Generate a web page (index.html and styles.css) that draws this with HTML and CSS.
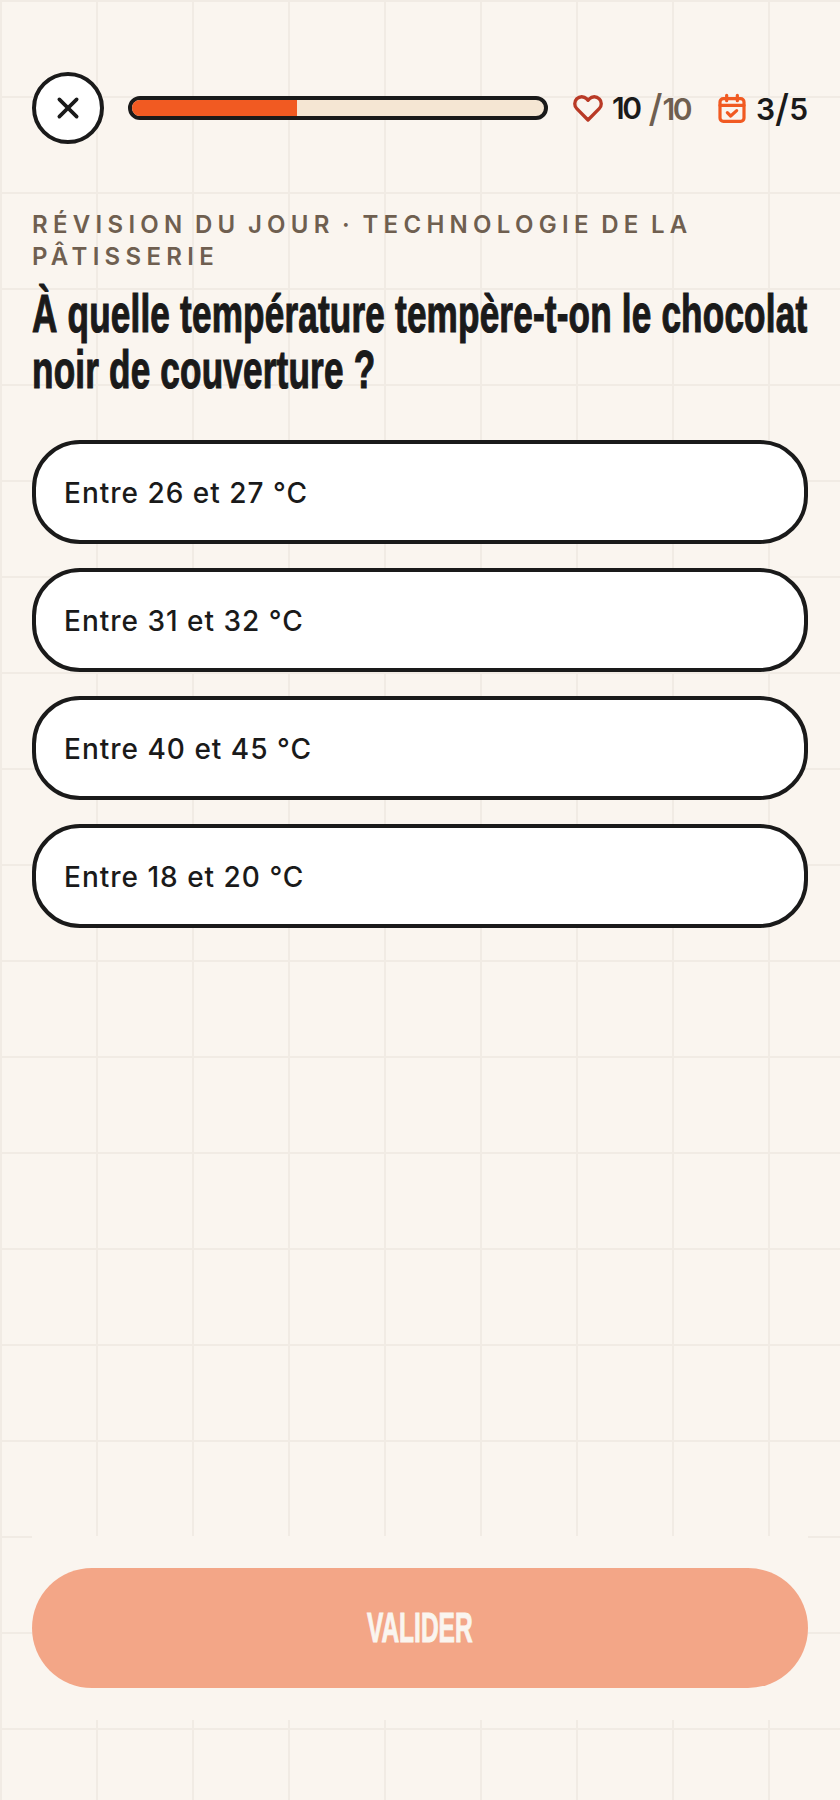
FILE: index.html

```html
<!DOCTYPE html>
<html lang="fr">
<head>
    <meta charset="UTF-8">
    <meta name="viewport" content="width=device-width, initial-scale=1.0">
    <title>Révision du jour</title>
    <link rel="stylesheet" href="styles.css">
</head>
<body>

<div class="ecran">
    <header class="entete">
        <button class="fermer" aria-label="Fermer">
            <svg width="32" height="32" viewBox="0 0 24 24" fill="none" stroke="#1a1a1a" stroke-width="2.75" stroke-linecap="round"><path d="M5.5 5.5l13 13M18.500 5.500l-13 13"/></svg>
        </button>
        <div class="progression"><div class="progression-barre" style="width: 40%"></div></div>
        <div class="stat stat-vies">
            <svg width="32" height="32" viewBox="0 0 24 24" fill="none" stroke="#b93a26" stroke-width="2.5" stroke-linecap="round" stroke-linejoin="round"><path d="M20.4 5.1a5.2 5.2 0 0 0-7.4 0L12 6.2l-1-1.100a5.200 5.200 0 0 0-7.400 7.400L12 21l8.400-8.500a5.200 5.200 0 0 0 0-7.400z"/></svg>
            <span class="stat-valeur">10</span>
            <span class="stat-total"><span class="barre">/</span>10</span>
        </div>
        <div class="stat">
            <svg width="32" height="32" viewBox="0 0 24 24" fill="none" stroke="#f15a22" stroke-width="2.4" stroke-linecap="round" stroke-linejoin="round"><rect x="3" y="5" width="18" height="17" rx="2.500"/><path d="M8 2.500v4M16 2.500v4M3 10h18M8.500 15.500l2.500 2.500 4.500-4"/></svg>
            <span class="stat-jours">3<span class="barre">/</span>5</span>
        </div>
    </header>

    <main class="question">
        <p class="surtitre">RÉVISION DU JOUR · TECHNOLOGIE DE LA PÂTISSERIE</p>
        <h1 class="intitule"><span class="intitule-texte">À quelle température tempère-t-on le chocolat noir de couverture ?</span></h1>
        <div class="reponses">
            <button class="reponse">Entre 26 et 27 °C</button>
            <button class="reponse">Entre 31 et 32 °C</button>
            <button class="reponse">Entre 40 et 45 °C</button>
            <button class="reponse">Entre 18 et 20 °C</button>
        </div>
    </main>

    <footer class="pied">
        <button class="valider" disabled><span class="valider-texte">VALIDER</span></button>
    </footer>
</div>

</body>
</html>
```

FILE: styles.css

```css
* {
    box-sizing: border-box;
}

body {
    margin: 0;
    height: 1800px;
    font-family: Inter, "Open Sans", sans-serif;
    color: #1a1a1a;
    background-color: #faf5ef;
    background-image:
        linear-gradient(#f1ebe4 2px, transparent 2px),
        linear-gradient(90deg, #f1ebe4 2px, transparent 2px);
    background-size: 96px 96px;
    overflow: hidden;
}

button {
    font-family: inherit;
    color: inherit;
    cursor: pointer;
}

.ecran {
    display: flex;
    flex-direction: column;
    height: 1800px;
    padding: 72px 32px 80px;
}

.entete {
    display: flex;
    align-items: center;
}

.fermer {
    display: flex;
    align-items: center;
    justify-content: center;
    flex: none;
    width: 72px;
    height: 72px;
    padding: 0;
    background: white;
    border: 4px solid #1a1a1a;
    border-radius: 50%;
}

.progression {
    flex: none;
    width: 420px;
    height: 24px;
    margin-left: 24px;
    background: #f5e6d3;
    border: 4px solid #1a1a1a;
    border-radius: 12px;
    overflow: hidden;
}

.progression-barre {
    height: 100%;
    background: #f15a22;
}

.stat {
    display: flex;
    align-items: center;
    margin-left: auto;
    font-size: 30px;
    line-height: 36px;
    font-weight: 600;
}

.stat svg {
    margin-right: 8px;
}

.stat-vies {
    margin-left: 24px;
}

.stat-valeur {
    letter-spacing: -2.5px;
}

.stat-total {
    margin-left: 9px;
    letter-spacing: -2.5px;
    color: #6f5f50;
}

.barre {
    font-size: 38px;
    font-weight: 500;
    line-height: 36px;
    letter-spacing: 0;
    vertical-align: -2px;
}

.question {
    flex: 1;
}

.surtitre {
    margin: 65px 0 0;
    font-size: 24px;
    line-height: 32px;
    font-weight: 600;
    letter-spacing: 5.3px;
    word-spacing: -4px;
    color: #6f5f50;
}

.intitule {
    margin: 12px 0 0;
    font-size: 54px;
    line-height: 56px;
    font-weight: 700;
}

/* pas de police condensée installée : le texte est resserré à la main */
.intitule-texte {
    display: block;
    width: 1200px;
    font-family: "Liberation Sans", sans-serif;
    letter-spacing: 0.3px;
    -webkit-text-stroke: 1.2px #1a1a1a;
    transform: scaleX(0.65);
    transform-origin: left top;
}

.reponses {
    display: flex;
    flex-direction: column;
    gap: 24px;
    margin-top: 43px;
}

.reponse {
    height: 104px;
    padding: 2px 28px 0;
    font-size: 28px;
    font-weight: 500;
    letter-spacing: 1px;
    text-align: left;
    background: white;
    border: 4px solid #1a1a1a;
    border-radius: 48px;
}

.pied {
    padding-top: 32px;
    padding-bottom: 32px;
    background: #faf5ef;
}

.valider {
    display: block;
    width: 100%;
    height: 120px;
    color: #faf5ef;
    background: #f3a687;
    border: none;
    border-radius: 60px;
}

.valider-texte {
    display: inline-block;
    margin-bottom: 2px;
    font-family: "Liberation Sans", sans-serif;
    font-size: 43px;
    font-weight: 700;
    -webkit-text-stroke: 1px #faf5ef;
    transform: scaleX(0.57);
}
```
